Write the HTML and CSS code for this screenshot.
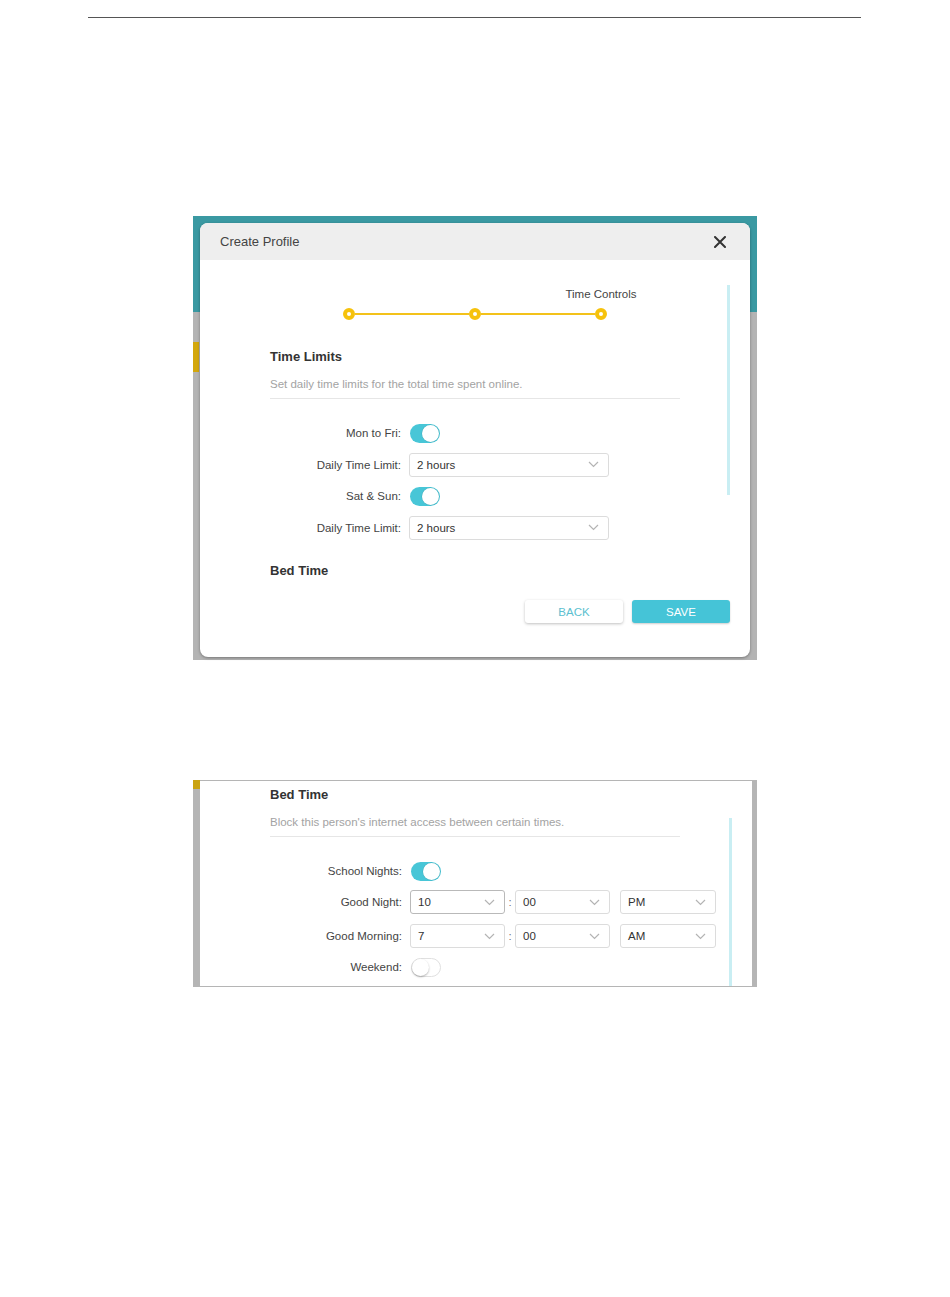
FILE: index.html
```html
<!DOCTYPE html>
<html lang="en">
<head>
<meta charset="utf-8">
<title>Create Profile - Time Controls</title>
<link rel="stylesheet" href="styles.css">
</head>
<body>
<div class="rule"></div>

<div class="shot shot-1">
  <div class="dialog">
    <div class="dlg-head">
      <span class="dlg-title">Create Profile</span>
      <svg class="close" width="12" height="12" viewBox="0 0 12 12"><path d="M1 1 L11 11 M11 1 L1 11" stroke="#333" stroke-width="2" stroke-linecap="round" fill="none"/></svg>
    </div>
    <div class="dlg-body">
      <div class="dlg-main">
        <div class="stepper">
          <span class="step-label"></span>
          <span class="step-label"></span>
          <span class="step-label">Time Controls</span>
          <div class="track"><i class="dot"></i><i class="bar"></i><i class="dot"></i><i class="bar"></i><i class="dot"></i></div>
        </div>
        <h3 class="sec-title">Time Limits</h3>
        <p class="sec-desc">Set daily time limits for the total time spent online.</p>
        <div class="form form-1">
          <div class="row"><span class="lbl">Mon to Fri:</span><span class="toggle on"><span class="knob"></span></span></div>
          <div class="row"><span class="lbl">Daily Time Limit:</span>
            <div class="select"><span>2 hours</span><svg width="11" height="7" viewBox="0 0 11 7"><polyline points="1,1 5.5,5.5 10,1" fill="none" stroke="#b4b4b4" stroke-width="1.2"/></svg></div></div>
          <div class="row"><span class="lbl">Sat &amp; Sun:</span><span class="toggle on"><span class="knob"></span></span></div>
          <div class="row"><span class="lbl">Daily Time Limit:</span>
            <div class="select"><span>2 hours</span><svg width="11" height="7" viewBox="0 0 11 7"><polyline points="1,1 5.5,5.5 10,1" fill="none" stroke="#b4b4b4" stroke-width="1.2"/></svg></div></div>
        </div>
        <h3 class="sec-title bed">Bed Time</h3>
      </div>
      <div class="scroll"></div>
    </div>
    <div class="dlg-foot">
      <button class="btn back">BACK</button>
      <button class="btn save">SAVE</button>
    </div>
  </div>
</div>

<div class="shot shot-2">
  <div class="panel">
    <div class="dlg-main">
      <h3 class="sec-title top">Bed Time</h3>
      <p class="sec-desc">Block this person's internet access between certain times.</p>
      <div class="form form-2">
        <div class="row"><span class="lbl">School Nights:</span><span class="toggle on"><span class="knob"></span></span></div>
        <div class="row"><span class="lbl">Good Night:</span>
          <div class="time">
            <div class="select sm focus"><span>10</span><svg width="11" height="7" viewBox="0 0 11 7"><polyline points="1,1 5.5,5.5 10,1" fill="none" stroke="#b4b4b4" stroke-width="1.2"/></svg></div>
            <span class="colon">:</span>
            <div class="select sm"><span>00</span><svg width="11" height="7" viewBox="0 0 11 7"><polyline points="1,1 5.5,5.5 10,1" fill="none" stroke="#b4b4b4" stroke-width="1.2"/></svg></div>
            <div class="select sm ampm"><span>PM</span><svg width="11" height="7" viewBox="0 0 11 7"><polyline points="1,1 5.5,5.5 10,1" fill="none" stroke="#b4b4b4" stroke-width="1.2"/></svg></div>
          </div>
        </div>
        <div class="row more"><span class="lbl">Good Morning:</span>
          <div class="time">
            <div class="select sm"><span>7</span><svg width="11" height="7" viewBox="0 0 11 7"><polyline points="1,1 5.5,5.5 10,1" fill="none" stroke="#b4b4b4" stroke-width="1.2"/></svg></div>
            <span class="colon">:</span>
            <div class="select sm"><span>00</span><svg width="11" height="7" viewBox="0 0 11 7"><polyline points="1,1 5.5,5.5 10,1" fill="none" stroke="#b4b4b4" stroke-width="1.2"/></svg></div>
            <div class="select sm ampm"><span>AM</span><svg width="11" height="7" viewBox="0 0 11 7"><polyline points="1,1 5.5,5.5 10,1" fill="none" stroke="#b4b4b4" stroke-width="1.2"/></svg></div>
          </div>
        </div>
        <div class="row"><span class="lbl">Weekend:</span><span class="toggle off"><span class="knob"></span></span></div>
      </div>
    </div>
    <div class="scroll"></div>
  </div>
</div>
</body>
</html>
```
FILE: styles.css
```css
body {
  margin: 0;
  background: #fff;
  font-family: "Liberation Sans", Arial, sans-serif;
  color: #333;
}

.rule {
  margin: 17px 0 0 88px;
  width: 773px;
  height: 1px;
  background: #555;
}

.shot {
  width: 564px;
  margin-left: auto;
  margin-right: auto;
  box-sizing: border-box;
}

.shot-1 {
  margin-top: 198px;
  height: 444px;
  padding: 7px 7px 3px 7px;
  background:
    linear-gradient(#d3a70c, #d3a70c) 0 126px / 6px 30px no-repeat,
    linear-gradient(#3a99a2 0, #3a99a2 96px, #b4b4b4 96px);
}

.dialog {
  height: 434px;
  background: #fff;
  border-radius: 8px;
  overflow: hidden;
  box-shadow: 0 1px 3px rgba(0, 0, 0, 0.35);
  display: flex;
  flex-direction: column;
}

.dlg-head {
  height: 37px;
  flex: none;
  background: #eeeeee;
  display: flex;
  align-items: center;
  justify-content: space-between;
  padding: 0 24px 0 20px;
}

.dlg-title {
  font-size: 13px;
  color: #444;
}

.dlg-body {
  display: flex;
}

.dlg-main {
  flex: 1;
  padding: 27px 0 0 70px;
}

.scroll {
  width: 3px;
  flex: none;
  background: #c9eef3;
  margin: 25px 20px 0 0;
  height: 210px;
}

.stepper {
  display: grid;
  grid-template-columns: repeat(3, 126px);
  width: 378px;
  margin-left: 16px;
}

.step-label {
  text-align: center;
  font-size: 11.5px;
  line-height: 14px;
  height: 14px;
  color: #444;
}

.track {
  grid-column: 1 / -1;
  display: flex;
  align-items: center;
  height: 12px;
  margin-top: 7px;
  padding: 0 57px;
}

.dot {
  flex: none;
  width: 12px;
  height: 12px;
  box-sizing: border-box;
  border: 4px solid #f6c20c;
  border-radius: 50%;
  background: #fff;
}

.bar {
  flex: 1;
  height: 1.5px;
  background: #f3c21a;
}

.sec-title {
  margin: 29px 0 0;
  font-size: 13px;
  font-weight: bold;
  line-height: 16px;
  color: #333;
}

.sec-title.bed {
  margin-top: 23.5px;
}

.sec-title.top {
  margin-top: 0;
}

.sec-desc {
  margin: 12px 0 0;
  width: 410px;
  font-size: 11.5px;
  line-height: 14px;
  color: #a3a3a3;
  padding-bottom: 7px;
  border-bottom: 1px solid #e6e6e6;
}

.form {
  margin-top: 22px;
  display: flex;
  flex-direction: column;
  gap: 7.5px;
}

.row {
  display: grid;
  grid-template-columns: 131px auto;
  column-gap: 8px;
  align-items: center;
  height: 24px;
}

.lbl {
  text-align: right;
  font-size: 11.5px;
  color: #444;
}

.toggle {
  margin-left: 1px;
  width: 30px;
  height: 19px;
  box-sizing: border-box;
  border-radius: 10px;
  display: flex;
  align-items: center;
  padding: 1px;
}

.toggle.on {
  background: #48c6d7;
  justify-content: flex-end;
}

.toggle .knob {
  width: 17px;
  height: 17px;
  border-radius: 50%;
  background: #fff;
  box-shadow: 0 0 0 0.5px rgba(0, 0, 0, 0.12);
}

.toggle.off {
  background: #fff;
  border: 1px solid #e0e0e0;
  padding: 0;
}

.toggle.off .knob {
  box-shadow: 0 1px 2px rgba(0, 0, 0, 0.3);
}

.select {
  width: 200px;
  height: 24px;
  box-sizing: border-box;
  border: 1px solid #dcdcdc;
  border-radius: 3px;
  display: flex;
  align-items: center;
  justify-content: space-between;
  padding: 0 9px 0 7px;
  font-size: 11.5px;
  color: #333;
}

.shot-2 {
  margin-top: 120px;
  height: 207px;
  padding: 1px 5px 1px 7px;
  background:
    linear-gradient(#c9a313, #c9a313) 0 0 / 7px 9px no-repeat,
    #b5b5b5;
}

.panel {
  height: 205px;
  background: #fff;
  display: flex;
}

.panel .dlg-main {
  padding-top: 6px;
}

.panel .scroll {
  height: auto;
  margin: 37px 20px 0 0;
}

.form-2 {
  gap: 7px;
}

.form-2 .row {
  grid-template-columns: 132px auto;
}

.row.more {
  margin-top: 3px;
}

.time {
  display: flex;
  align-items: center;
}

.select.sm {
  width: 95px;
}

.select.ampm {
  width: 96px;
  margin-left: 10px;
}

.select.focus {
  border-color: #b9b9b9;
}

.colon {
  width: 10px;
  text-align: center;
  font-size: 11.5px;
  color: #777;
}

.dlg-foot {
  display: flex;
  justify-content: flex-end;
  gap: 9px;
  padding: 21px 20px 0;
}

.btn {
  width: 98px;
  height: 23px;
  border: 0;
  border-radius: 3px;
  font-family: "Liberation Sans", Arial, sans-serif;
  font-size: 11.5px;
  padding: 0;
}

.btn.back {
  background: #fff;
  color: #5cbfd0;
  box-shadow: 0 1px 3px rgba(0, 0, 0, 0.25);
}

.btn.save {
  background: #45c4d7;
  color: #fff;
  box-shadow: 0 1px 2px rgba(0, 0, 0, 0.2);
}
```
